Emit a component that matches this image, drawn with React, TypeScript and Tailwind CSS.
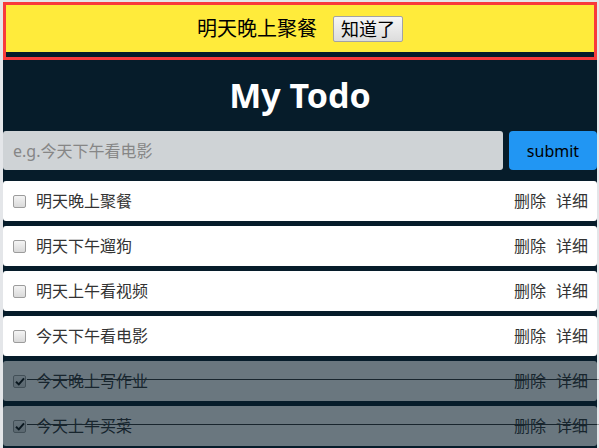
import React from "react";

const FONT = "font-['Noto_Sans','Noto_Sans_CJK_SC',sans-serif]";

type Todo = { text: string; done: boolean };

const todos: Todo[] = [
  { text: "明天晚上聚餐", done: false },
  { text: "明天下午遛狗", done: false },
  { text: "明天上午看视频", done: false },
  { text: "今天下午看电影", done: false },
  { text: "今天晚上写作业", done: true },
  { text: "今天上午买菜", done: true },
];

function Box({ checked }: { checked: boolean }) {
  return (
    <span className="relative flex h-[13px] w-[13px] shrink-0 items-center justify-center rounded-[2px] border border-[#9c9c9c] bg-gradient-to-b from-[#f4f4f4] to-[#d9d9d9]">
      {checked && (
        <svg width="10" height="9" viewBox="0 0 10 9">
          <path d="M1 4.8 L3.8 7.4 L9 1.4" stroke="#111" strokeWidth="2" fill="none" />
        </svg>
      )}
    </span>
  );
}

function Row({ t }: { t: Todo }) {
  return (
    <div
      className={`relative flex h-[40px] items-center rounded-[3px] bg-white pl-[10px] pr-[9px] text-[16px] text-[#333] ${
        t.done ? "opacity-40" : ""
      }`}
    >
      <Box checked={t.done} />
      <span className="ml-[10px] flex-1">{t.text}</span>
      <span>删除</span>
      <span className="ml-[10px]">详细</span>
      {t.done && <div className="absolute left-[24px] right-[-2px] top-[18px] h-px bg-[#333]" />}
    </div>
  );
}

export default function App() {
  return (
    <div className={`min-h-[448px] bg-[#e4e6e9] pl-[3px] pr-[2px] pt-[2px] ${FONT}`}>
      <div className="min-h-[446px] bg-[#061c2a]">
        <div className="border-[3px] border-[#f83b3b]">
          <div className="flex h-[47px] items-center justify-center bg-[#ffeb3b] text-[20px] text-black">
            <span>明天晚上聚餐</span>
            <button className="ml-[16px] flex h-[26px] w-[70px] items-center justify-center rounded-[2px] border border-[#a3a3a3] bg-gradient-to-b from-[#f6f6f6] to-[#dcdcdc] text-[18px] leading-none text-black">
              知道了
            </button>
          </div>
          <div className="h-[5px]" />
        </div>
        <h1 className="flex h-[71px] items-center justify-center text-[34px] font-bold text-white">My Todo</h1>
        <div className="flex h-[39px]">
          <div className="flex flex-1 items-center rounded-[3px] bg-[#cfd3d6] pl-[10px] text-[16px] text-[#868686]">
            e.g.今天下午看电影
          </div>
          <button className="ml-[6px] w-[88px] rounded-[4px] bg-[#2196f3] text-[16px] text-black">submit</button>
        </div>
        <div className="mt-[11px] flex flex-col gap-[5px]">
          {todos.map((t, i) => (
            <Row key={i} t={t} />
          ))}
        </div>
      </div>
    </div>
  );
}
